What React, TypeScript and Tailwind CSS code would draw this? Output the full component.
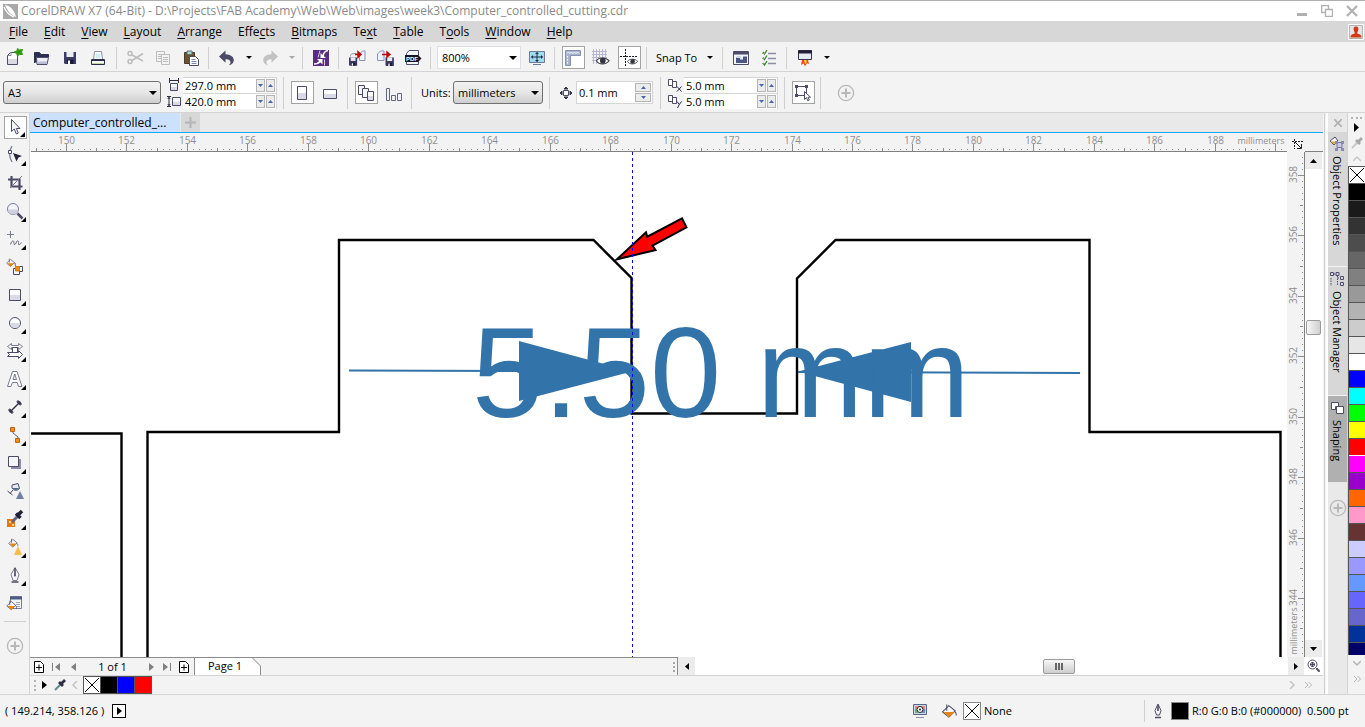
import React from "react";

const DARK = "#4c4c68";
const MID = "#8c8ca6";
const PALE = "#dadae4";
const GHOST = "#bdbdbd";

function Ico({ children, className = "" }: { children: React.ReactNode; className?: string }) {
  return (
    <svg viewBox="0 0 20 20" fill="none" stroke={DARK} className={`h-5 w-5 shrink-0 ${className}`} aria-hidden="true">
      {children}
    </svg>
  );
}

/* ---------- standard toolbar icons ---------- */

const NewIcon = () => (
  <Ico>
    <path d="M3.500 16.500v-9l3-3h7v12z" fill="#fff" />
    <path d="M4 11h9v5H4z" fill={PALE} stroke="none" />
    <path d="M4 7.500h3v-3" stroke={MID} />
    <path d="M10 4l3-1 .5-2.500 2 1.500 3-.5-1 2.500 1 2.500-3-.2-2 1.700-.8-2.500z" fill="#2f9a0c" stroke="#2f9a0c" />
  </Ico>
);
const OpenIcon = () => (
  <Ico>
    <path d="M2.500 15V4.500h5l1.500 2h7.500V9" fill="#2b2f50" stroke="#2b2f50" />
    <path d="M4.500 9.500h12l-1.500 7H5z" fill="#eef0f8" stroke={DARK} />
    <path d="M5.500 13.500h9.500l-.5 2.500h-8.500z" fill="#b9bcd4" stroke="none" />
  </Ico>
);
const DiskShape = ({ x, y, s }: { x: number; y: number; s: number }) => (
  <g transform={`translate(${x} ${y}) scale(${s})`} stroke="none">
    <path d="M0 0h12v12H1l-1-1z" fill="#3c3c64" />
    <path d="M2.500 0h7v5h-7z" fill="#eceef6" />
    <path d="M3 7.500h6.500V12H3z" fill="#1b1b38" />
    <path d="M4 8.500h2V12H4z" fill="#fff" />
  </g>
);
const SaveIcon = () => (
  <Ico>
    <DiskShape x={4} y={4} s={1} />
  </Ico>
);
const PrintIcon = () => (
  <Ico>
    <path d="M6.500 3.500h7l1 8h-9z" fill="#fff" stroke={MID} />
    <path d="M7.500 5.500h5v5h-5z" fill="#d5ecee" stroke="none" />
    <path d="M3.500 11.500h13v5h-13z" fill="#f6f6fa" stroke="#2c2c4c" />
    <path d="M4 12h12" stroke="#2c2c4c" strokeWidth="2" />
    <path d="M4 15.500h12" stroke="#c6d6a8" />
  </Ico>
);
const CutIcon = () => (
  <Ico>
    <g stroke={GHOST} strokeWidth="1.500">
      <circle cx="5" cy="5.500" r="2" />
      <circle cx="5" cy="13.500" r="2" />
      <path d="M7 7l11 6M7 12.500l11-7" />
    </g>
  </Ico>
);
const CopyIcon = () => (
  <Ico>
    <g stroke={GHOST}>
      <path d="M3.500 3.500h8v10h-8z" fill="#f3f3f3" />
      <path d="M5 6.500h4M5 8.500h3M5 10.500h3" />
      <path d="M8.500 6.500h8v10h-8z" fill="#f3f3f3" />
      <path d="M10 9.500h5M10 11.500h5M10 13.500h5" />
    </g>
  </Ico>
);
const PasteIcon = () => (
  <Ico>
    <path d="M3.500 4.500h10v11h-10z" fill="#6b5136" stroke="#4b3a2a" />
    <path d="M6 3h5v3.500H6z" fill="#a9d4d2" stroke="#57706f" />
    <path d="M8.500 8.500h6l3 3v6h-9z" fill="#fff" stroke={DARK} />
    <path d="M10.500 11.500h4M10.500 13.500h5M10.500 15.500h5" stroke="#7d88a8" />
  </Ico>
);
const UndoShape = ({ c }: { c: string }) => (
  <path d="M2 8.500l6.500-6v3.700c5.500.3 8.500 2.800 8.300 6.300-.2 2.700-2.300 4.300-5 4.800 1.600-1.200 2.100-2.500 1.400-4-.7-1.500-2.200-2-4.700-2v3.500z" fill={c} stroke="none" />
);
const UndoIcon = () => (
  <Ico>
    <UndoShape c={DARK} />
  </Ico>
);
const RedoIcon = () => (
  <Ico className="-scale-x-100">
    <UndoShape c="#c2c2c2" />
  </Ico>
);
const LaunchIcon = () => (
  <Ico>
    <path d="M2 2h16v16H2z" fill="#582c83" stroke="none" />
    <path d="M9 2.500l-2 7" stroke="#d9c8ea" />
    <path d="M17 2.500c-2.500.5-4.500 2.500-5 5.500" stroke="#fff" strokeWidth="1.600" />
    <path d="M9.500 5v5h5.500z" fill="#fff" stroke="none" />
    <path d="M3 16c3 0 5-1 6.500-3" stroke="#fff" strokeWidth="1.600" />
    <path d="M6 11h5.500v5.500z" fill="#fff" stroke="none" />
    <path d="M13.500 11.500v6" stroke="#d9c8ea" />
  </Ico>
);
const ImportIcon = () => (
  <Ico>
    <path d="M12.500 12.500V6l3-3h2.500v9.500z" fill="#eef2fa" stroke="#8a93b0" />
    <DiskShape x={2} y={9.500} s={0.68} />
    <path d="M3.500 8.500c0-3 2-3 6-3" stroke="#8a93b0" />
    <path d="M8 6.500h5M11 3.800l3 2.700-3 2.700z" stroke="#c00b0b" fill="#c00b0b" strokeWidth="1.500" />
  </Ico>
);
const ExportIcon = () => (
  <Ico>
    <path d="M2.500 12.500V6l3-3h3.500v9.500z" fill="#eef2fa" stroke="#8a93b0" />
    <DiskShape x={10.500} y={9.500} s={0.7} />
    <path d="M7 6.500h6M12 4l3 2.500L12 9z" stroke="#c00b0b" fill="#c00b0b" strokeWidth="1.500" />
  </Ico>
);
const PdfIcon = () => (
  <Ico>
    <path d="M3.500 16.500v-11l2.500-3h9.500v14z" fill="#f4f4fa" stroke={DARK} />
    <path d="M2 7h13l3.500 3.500-3.500 3.500H2z" fill="#151525" stroke="none" />
    <text x="3" y="12.700" fontSize="6" fontWeight="700" fill="#fff" stroke="none" fontFamily="Liberation Sans, sans-serif">PDF</text>
  </Ico>
);
const ScreenIcon = () => (
  <Ico>
    <path d="M2.500 3.500h15v11h-15z" fill="#9fdcec" stroke="#6a7a98" />
    <path d="M6 16.500h8" stroke="#6a7a98" />
    <path d="M10 4.500v9M4.500 9h11" stroke="#20304a" />
    <path d="M8 6l2-2 2 2zM8 12l2 2 2-2zM6 7L4 9l2 2zM14 7l2 2-2 2z" fill="#20304a" stroke="none" />
  </Ico>
);
const RulersIcon = () => (
  <Ico>
    <path d="M2.500 2.500h15v5h-10v10h-5z" fill="#a9b6d0" stroke="#8490ac" />
    <path d="M4 5.500l1.500-1.500L7 5.500 8.500 4 10 5.500 11.500 4 13 5.500 14.500 4 16 5.500M4.500 8v1.500M4.500 11v1.500M4.500 14v1.500" stroke="#fff" />
  </Ico>
);
const Eye = ({ x, y, s = 1 }: { x: number; y: number; s?: number }) => (
  <g transform={`translate(${x} ${y}) scale(${s})`}>
    <path d="M0 4C2 .5 9 .5 12 4 9 8 2 8 0 4z" fill="#fff" stroke="#3a3a46" />
    <circle cx="6" cy="4" r="2.700" fill="#34343e" stroke="none" />
  </g>
);
const GridIcon = () => (
  <Ico>
    <path d="M2.500 1v15M5.500 1v15M8.500 1v13M11.500 1v13M14.500 1v13M1 3.500h15M1 6.500h15M1 9.500h15M1 12.500h15" stroke="#b4b6cc" />
    <Eye x={5.500} y={8.500} s={1.050} />
  </Ico>
);
const GuidesIcon = () => (
  <Ico>
    <path d="M6.500 1v18M1 8.500h17" stroke="#1c1c2c" strokeDasharray="2 1" />
    <Eye x={8.500} y={10} s={0.85} />
  </Ico>
);
const WelcomeIcon = () => (
  <Ico>
    <path d="M2.500 3.500h15v13h-15z" fill="#f2f4fa" stroke={DARK} />
    <path d="M3 5h14" stroke={DARK} strokeWidth="3" />
    <path d="M5 9.500h4v2h3v-3h4v6.500H5z" fill="#4b5687" stroke="none" />
    <path d="M6 8h4v2H6z" fill="#cfd6ee" stroke="none" />
  </Ico>
);
const OptionsIcon = () => (
  <Ico>
    <path d="M9 5.500h8M9 10.500h8M9 15.500h8" stroke={MID} strokeWidth="1.500" />
    <path d="M4 4l1.500 2L8 2M4 9.500l1.500 2L8 7.500M4 15l1.500 2L8 13" stroke="#3c8a2c" strokeWidth="1.300" />
    <path d="M3 5.500h3M3 10.500h3M3 15.500h3" stroke="#8aa08a" />
  </Ico>
);
const LauncherIcon = () => (
  <Ico>
    <path d="M3.500 2.500h13v9h-13z" fill="#e8eaf2" stroke="#33334c" />
    <path d="M3 4h14" stroke="#20203a" strokeWidth="3" />
    <path d="M7 12h6l1 4-2-.8-2 3-1.500-2.700L6 17z" fill="#f04a16" stroke="none" />
    <path d="M9 12h2.500v3L10 16z" fill="#ffd23e" stroke="none" />
  </Ico>
);

/* ---------- property bar icons ---------- */

const WidthIcon = () => (
  <svg viewBox="0 0 14 14" className="h-[14px] w-[14px] shrink-0" fill="none" stroke={DARK} aria-hidden="true">
    <path d="M3.500 5.500h7v7h-7z" fill="#f4f4fa" />
    <path d="M4 9h6v3H4z" fill={PALE} stroke="none" />
    <path d="M2.500 0v5M11.500 0v5M3 2.500h8" stroke="#2c2c44" />
  </svg>
);
const HeightIcon = () => (
  <svg viewBox="0 0 14 14" className="h-[14px] w-[14px] shrink-0" fill="none" stroke={DARK} aria-hidden="true">
    <path d="M5.500 3.500h8v8h-8z" fill="#f4f4fa" />
    <path d="M6 8h7v3H6z" fill={PALE} stroke="none" />
    <path d="M0 2.500h4M0 12.500h4M2 3v9M.8 5L2 3.500 3.200 5M.8 10L2 11.500 3.200 10" stroke="#2c2c44" />
  </svg>
);
const PortraitIcon = () => (
  <Ico>
    <path d="M5.500 3.500h9v13h-9z" fill="#fff" />
    <path d="M6 10h8v6H6z" fill={PALE} stroke="none" />
  </Ico>
);
const LandscapeIcon = () => (
  <Ico>
    <path d="M3.500 6.500h13v9h-13z" fill="#fff" />
    <path d="M4 11h12v4H4z" fill={PALE} stroke="none" />
  </Ico>
);
const AllPagesIcon = () => (
  <Ico>
    <path d="M2.500 2.500h6v9h-6z" fill="#f4f4fa" />
    <path d="M6.500 5.500h6v9h-6z" fill="#f4f4fa" />
    <path d="M11.500 8.500h6v9h-6z" fill="#fff" />
    <path d="M12 13h5v4h-5z" fill={PALE} stroke="none" />
  </Ico>
);
const CurrentPageIcon = () => (
  <Ico>
    <path d="M2.500 5.500h3v12h-3zM7.500 12.500h4v5h-4zM13.500 10.500h4v7h-4z" fill="#f0f0f6" stroke="#66667e" />
  </Ico>
);
const NudgeIcon = () => (
  <Ico>
    <path d="M7.500 7.500h5v5h-5z" fill="#fff" />
    <path d="M10 4L8 6h4zM10 16l-2-2h4zM4 10l2-2v4zM16 10l-2-2v4z" fill="#33334a" stroke="#33334a" />
  </Ico>
);
const DupIcon = ({ axis }: { axis: "x" | "y" }) => (
  <svg viewBox="0 0 14 14" className="h-[14px] w-[14px] shrink-0" fill="none" stroke={DARK} aria-hidden="true">
    <path d="M.5 1.500h4v6h-4zM4.500 3.500h4v6h-4z" fill="#fff" />
    {axis === "x" ? <path d="M9 8.500l4.500 5M13.500 8.500l-4.500 5" stroke="#2c2c44" /> : <path d="M9 7.500l2.300 3 2.200-3M11.300 10.500L9.500 14" stroke="#2c2c44" />}
  </svg>
);
const TreatIcon = () => (
  <Ico>
    <path d="M3.500 3.500h10v9h-10z" />
    <path d="M2 2h3v3H2zM12 2h3v3h-3zM2 11h3v3H2z" fill={DARK} stroke="none" />
    <path d="M11.500 8.500v8l2-1.800 1.200 3 1.600-.7-1.300-2.800h2.500z" fill="#fff" />
  </Ico>
);
const PlusCircle = ({ label }: { label: string }) => (
  <button aria-label={label} className="shrink-0">
    <svg viewBox="0 0 18 18" className="h-[18px] w-[18px]" fill="none" stroke="#b8b8b8" aria-hidden="true">
      <circle cx="9" cy="9" r="7.600" strokeWidth="1.300" />
      <path d="M9 4.500v9M4.500 9h9" strokeWidth="2" />
    </svg>
  </button>
);

/* ---------- toolbox icons ---------- */

const bucket = (x: number, y: number, s: number) => (
  <g transform={`translate(${x} ${y}) scale(${s})`}>
    <path d="M1 8l6-6 6 5-6 6z" fill="#f6f6fa" stroke={DARK} />
    <path d="M2 8h10.500l-5.500 5z" fill="#e88410" stroke="none" />
    <path d="M5 1v6M12.500 7.500c2 1 1.500 3 1.500 4" stroke={DARK} />
  </g>
);

const tools: { name: string; flyout?: boolean; active?: boolean; art: React.ReactNode }[] = [
  { name: "Pick", flyout: true, active: true, art: <path d="M6.500 2.500v12l2.800-2.500 2 5 2-.9-2-4.600h3.700z" fill="#f6f6fa" /> },
  {
    name: "Shape", flyout: true,
    art: (<>
      <path d="M7 1c-3 5-3 11 0 16" stroke="#7a7a98" strokeWidth="1.300" />
      <path d="M3.500 5.500h3v3h-3z" fill="#fff" />
      <path d="M8 8l9 3-3.500 1.500-2 4z" fill="#22223a" stroke="none" />
    </>),
  },
  {
    name: "Crop", flyout: true,
    art: (<>
      <path d="M6.500 3v10.500h11M3 6.500h11.500V17" strokeWidth="2.200" />
      <path d="M5 15L17 3" stroke="#7a7a98" />
    </>),
  },
  {
    name: "Zoom", flyout: true,
    art: (<>
      <circle cx="8" cy="8" r="5.500" fill="#f4f4fa" stroke="#7a7a98" />
      <path d="M3 8.500h10a5 5 0 01-10 0z" fill="#cfcfe0" stroke="none" />
      <path d="M12.500 12.500l5 5" strokeWidth="2.500" />
    </>),
  },
  {
    name: "Freehand", flyout: true,
    art: (<>
      <path d="M5.500 2v7M2 5.500h7" stroke="#7a7a98" />
      <path d="M5.500 15.500c1.500-4.500 3.500-4.500 3.500-1.500s1.500 1.500 2.500-1 2.500-.5 2 1.500 1.500 1.500 3-1" stroke="#66667e" />
    </>),
  },
  {
    name: "Smart fill",
    art: (<>
      {bucket(1, 1, 0.65)}
      <path d="M11.500 9.500h6v5h-6z" fill="#fff" stroke={DARK} />
      <path d="M8.500 11.500h6v6h-6z" fill="#fff" stroke={DARK} />
      <path d="M10.500 6v8h4V9.500h-4z" fill="#f08a10" stroke="#e07808" />
    </>),
  },
  {
    name: "Rectangle", flyout: true,
    art: (<>
      <path d="M4.500 4.500h11v11h-11z" fill="#fff" />
      <path d="M5 10h10v5H5z" fill={PALE} stroke="none" />
    </>),
  },
  {
    name: "Ellipse", flyout: true,
    art: (<>
      <circle cx="10" cy="10" r="5.500" fill="#fff" />
      <path d="M5 10h10a5 5 0 01-10 0z" fill={PALE} stroke="none" />
    </>),
  },
  {
    name: "Basic shapes", flyout: true,
    art: (<>
      <path d="M2.500 5.500l4-3v2h7v-2l4 3-4 3v-2h-7v2z" fill="#fff" stroke="#7a7a98" />
      <path d="M7.500 6.500h5v5h-5z" fill="#fff" />
      <path d="M2.500 11.500h11V9.500l4 4-4 4v-2h-11l2-2z" fill="#fff" />
    </>),
  },
  {
    name: "Text", flyout: true,
    art: <path d="M2.500 17.500l5-15h4.500l5 15h-3.500l-1.300-4H7.300l-1.300 4zM8 10.500h3.500l-1.700-5.500z" fill="#fff" stroke="#7a7a90" fillRule="evenodd" />,
  },
  {
    name: "Parallel dimension", flyout: true,
    art: (<>
      <path d="M5 15L15 5" strokeWidth="1.500" stroke="#33334a" />
      <path d="M4.500 11l4.500 4.500H4.500zM15.500 9L11 4.500h4.500z" fill="#33334a" stroke="none" />
      <path d="M3.500 12.500l4 4M12.500 3.500l4 4" stroke="#33334a" strokeWidth="1.500" />
    </>),
  },
  {
    name: "Connector", flyout: true,
    art: (<>
      <path d="M8 5v3l5 4v3" stroke="#66667e" />
      <path d="M5.500 2.500h4v4h-4zM10.500 13.500h4v4h-4z" fill="#ff8a10" stroke="#b8641a" />
    </>),
  },
  {
    name: "Drop shadow", flyout: true,
    art: (<>
      <path d="M6 6h10v10H6z" fill="#8c8ca8" stroke="none" />
      <path d="M3.500 3.500h10v10h-10z" fill="#f6f6fa" />
    </>),
  },
  {
    name: "Transparency",
    art: (<>
      <path d="M7 4l6-1.500 1.500 5c-2.500 3-6 2-7.500-.5z" fill="#e8eaf4" />
      <path d="M7.500 7h7c-2.500 3-6 2-7.500 0z" fill="#4a6a86" stroke="none" />
      <path d="M8 9l-3 3.500M2.500 10l5 4" />
      <path d="M15 10l4 8h-8z" fill="#7080a0" stroke="none" />
    </>),
  },
  {
    name: "Color eyedropper", flyout: true,
    art: (<>
      <path d="M2 10h8v8H2z" fill="#e8780c" stroke="none" />
      <path d="M4 12h2v2H4zM7 15h2v2H7z" fill="#ffd79a" stroke="none" />
      <path d="M7 13l6-6" stroke="#66667e" strokeWidth="3" />
      <path d="M11 4.500l4.500 4.500M13 6l4-4" stroke="#22223a" strokeWidth="3.500" />
    </>),
  },
  {
    name: "Interactive fill", flyout: true,
    art: (<>
      {bucket(3, 1, 0.7)}
      <path d="M13 9l4 9H9z" fill="#f6bc50" stroke="none" />
    </>),
  },
  {
    name: "Outline pen", flyout: true,
    art: (<>
      <path d="M10 2.500l-4 7 2 6h4l2-6z" fill="#f4f4fa" stroke="#7a7a90" />
      <path d="M10 3v7M6.500 17h7" strokeWidth="1.600" />
      <circle cx="10" cy="10.500" r="1" fill={DARK} stroke="none" />
    </>),
  },
  {
    name: "Edit fill",
    art: (<>
      <path d="M5.500 3.500h11v12h-11z" fill="#f4f4fa" stroke="#7a7a98" />
      <path d="M5 5h12" stroke="#4c5c86" strokeWidth="3" />
      <path d="M11 9.500h4M11 11.500h4M11 13.500h4" stroke="#a0a0b8" />
      {bucket(1, 7, 0.75)}
    </>),
  },
];

/* ---------- small parts ---------- */

const Sep = ({ tall = false }: { tall?: boolean }) => (
  <span className={`${tall ? "h-8" : "h-[22px]"} mr-[4px] ml-[3px] w-px shrink-0 border-l border-[#cfcfcf]`} />
);

const Caret = ({ muted = false, label }: { muted?: boolean; label: string }) => (
  <button aria-label={label} className="flex h-6 w-[15px] shrink-0 items-center justify-center">
    <svg viewBox="0 0 6 3" className={`h-[3px] w-[6px] ${muted ? "fill-[#a8a8a8]" : "fill-black"}`} aria-hidden="true">
      <path d="M0 0h6L3 3z" />
    </svg>
  </button>
);

function Tool({ label, boxed = false, children }: { label: string; boxed?: boolean; children: React.ReactNode }) {
  return (
    <button aria-label={label} title={label} className="flex h-[23px] w-7 shrink-0 items-center justify-center">
      <span className={`flex h-[23px] w-[23px] items-center justify-center ${boxed ? "border border-[#a3a3a3] bg-white" : ""}`}>
        {children}
      </span>
    </button>
  );
}

function Drop({ label, value, options, className, white = false }: { label: string; value: string; options: string[]; className: string; white?: boolean }) {
  return (
    <span className={`relative flex h-[23px] shrink-0 ${className}`}>
      <select
        aria-label={label}
        defaultValue={value}
        className={`h-full w-full appearance-none pl-[4px] text-[11px] leading-4 text-black outline-none ${
          white ? "border border-[#dcdfe6] bg-white" : "rounded-[3px] border border-[#707070] bg-gradient-to-b from-[#f2f2f2] via-[#e6e6e6] to-[#cfcfcf]"
        }`}
      >
        {options.map((o) => (
          <option key={o}>{o}</option>
        ))}
      </select>
      <svg viewBox="0 0 8 4" className="pointer-events-none absolute top-[10px] right-[4px] h-[4px] w-[8px]" aria-hidden="true">
        <path d="M0 0h8L4 4z" />
      </svg>
    </span>
  );
}

const SpinArrow = ({ up = false }: { up?: boolean }) => (
  <svg viewBox="0 0 5 3" className="h-[3px] w-[5px] fill-[#4a66a8]" aria-hidden="true">
    {up ? <path d="M0 3h5L2.500 0z" /> : <path d="M0 0h5L2.500 3z" />}
  </svg>
);

function SideSpin({ label, value }: { label: string; value: string }) {
  return (
    <span className="flex h-4 w-[94px] items-center gap-px border-t border-r border-[#d5d5d5] bg-white pr-px">
      <input aria-label={label} defaultValue={value} className="h-full w-[72px] min-w-0 flex-1 pl-[2px] text-[11px] leading-4 outline-none" />
      <button aria-label={`${label} down`} className="flex h-[13px] w-[9px] items-center justify-center border border-[#b4b4b4] bg-[#ececec]">
        <SpinArrow />
      </button>
      <button aria-label={`${label} up`} className="flex h-[13px] w-[9px] items-center justify-center border border-[#b4b4b4] bg-[#ececec]">
        <SpinArrow up />
      </button>
    </span>
  );
}

const Cross = () => (
  <svg viewBox="0 0 16 16" className="h-full w-full" stroke="#000" fill="none" aria-hidden="true">
    <path d="M1 1l14 14M15 1L1 15" />
  </svg>
);

const menus: [string, string, string][] = [
  ["", "F", "ile"], ["", "E", "dit"], ["", "V", "iew"], ["", "L", "ayout"], ["", "A", "rrange"], ["Effe", "c", "ts"],
  ["", "B", "itmaps"], ["Te", "x", "t"], ["", "T", "able"], ["T", "o", "ols"], ["", "W", "indow"], ["", "H", "elp"],
];

const palette = [
  "#000000", "#1a1a1a", "#333333", "#4d4d4d", "#666666", "#808080", "#999999", "#b3b3b3", "#cccccc", "#e6e6e6", "#ffffff",
  "#0000ff", "#00ffff", "#00ff00", "#ffff00", "#ff0000", "#ff00ff", "#9900cc", "#ff6600", "#ff99cc", "#663333",
  "#ccccff", "#9999ff", "#6699ff", "#6666ff", "#6666cc", "#003399", "#000066",
];

/* ---------- rulers ---------- */

const MM = 30.23;

function HorizontalRuler() {
  const ticks: string[] = [];
  const labels: { x: number; t: number }[] = [];
  for (let i = -5; i < 205; i++) {
    const x = Math.round(36 + (i * MM) / 5) + 0.5;
    if (i % 10 === 0) {
      ticks.push(`M${x} 11V18`);
      labels.push({ x, t: 150 + i / 5 });
    } else ticks.push(i % 5 === 0 ? `M${x} 15V18` : `M${x} 16V17`);
  }
  return (
    <svg className="h-[19px] min-w-0 flex-1 bg-[#f3f3f3]" role="img" aria-label="Horizontal ruler">
      <path d={ticks.join("")} stroke="#8c8c8c" />
      <path d="M1 18.500H1257" stroke="#808080" />
      {labels.filter((l) => l.t < 189).map((l) => (
        <text key={l.t} x={l.x} y="11" textAnchor="middle" className="fill-[#8f8f8f] text-[10px]">{l.t}</text>
      ))}
      <text x="1231" y="11" textAnchor="middle" className="fill-[#8f8f8f] text-[9px]">millimeters</text>
    </svg>
  );
}

function VerticalRuler() {
  const ticks: string[] = [];
  const labels: { y: number; t: number }[] = [];
  for (let i = -3; i < 80; i++) {
    const y = Math.round(23 + (i * MM) / 5) + 0.5;
    if (i % 10 === 0) {
      ticks.push(`M11 ${y}H17`);
      labels.push({ y, t: 358 - i / 5 });
    } else ticks.push(i % 5 === 0 ? `M13 ${y}H16` : `M15 ${y}H16`);
  }
  return (
    <svg className="h-full w-[18px] shrink-0 bg-[#f3f3f3]" role="img" aria-label="Vertical ruler">
      <path d={ticks.join("")} stroke="#8c8c8c" />
      <path d="M17.500 0V505" stroke="#808080" />
      {labels.filter((l) => l.t > 342).map((l) => (
        <text key={l.t} transform={`translate(10 ${l.y - 1}) rotate(-90)`} textAnchor="middle" className="fill-[#8f8f8f] text-[10px]">{l.t}</text>
      ))}
      <text transform="translate(10 479) rotate(-90)" textAnchor="middle" className="fill-[#8f8f8f] text-[9px]">millimeters</text>
    </svg>
  );
}

function Drawing() {
  return (
    <svg className="h-full min-w-0 flex-1 bg-white" role="img" aria-label="Cutting profile with a 5.50 mm slot">
      <g transform="translate(-30 -152)" fill="none">
        <g stroke="#000" strokeWidth="2.400">
          <path d="M31 433.500H121.500V680" />
          <path d="M147.500 680V432H339V240H593.500L631.500 278V413.500H797V278.500L835.500 240H1089.500V432H1280.500V680" />
        </g>
        <path d="M617 259.300L646 232.300L647.300 236.700L682 218.300L686.500 227.300L652.500 245.500L655.500 250Z" fill="#f00" stroke="#000" strokeWidth="2" />
        <g fill="#3274a9">
          <path d="M349 370.500L632 371.500M798 372L1080 373" stroke="#3274a9" strokeWidth="2" />
          <path d="M519 341L632 371.500L519 401ZM911 342L798 371.500L911 402Z" />
          <text x="472" y="417" className="font-['Liberation_Sans',Arial,sans-serif] text-[128px]">5.50 mm</text>
        </g>
        <path d="M632.500 152V680" stroke="#00f" strokeDasharray="3 3" />
      </g>
    </svg>
  );
}

/* ---------- sections ---------- */

function TitleBar() {
  return (
    <header className="flex h-[21px] shrink-0 items-center border-t border-[#b0b0b0] bg-white pr-[7px] pl-[3px] text-[#8a8a8a]">
      <svg viewBox="0 0 15 15" className="mr-[3px] h-[15px] w-[15px] shrink-0" aria-hidden="true">
        <path d="M0 0h15v15H0z" fill="#a8a8a8" />
        <path d="M2 1c6 1 9 5 11 12C8 11 5 8 2 1z" fill="#fff" />
        <path d="M1 3c2 5 5 8 10 10" stroke="#fff" strokeWidth="1.200" fill="none" />
      </svg>
      <h1 className="truncate text-[12px] leading-4">CorelDRAW X7 (64-Bit) - D:\Projects\FAB Academy\Web\Web\images\week3\Computer_controlled_cutting.cdr</h1>
      <div className="ml-auto flex items-center gap-[13px]">
        <button aria-label="Minimize">
          <svg viewBox="0 0 12 12" className="h-3 w-3" aria-hidden="true"><path d="M1 8h10v3H1z" fill="#b0b0b0" /></svg>
        </button>
        <button aria-label="Restore">
          <svg viewBox="0 0 12 12" className="h-3 w-3" fill="none" stroke="#b0b0b0" strokeWidth="1.300" aria-hidden="true">
            <path d="M4 7.500H.7V.7h6.800v3M4.500 4.500h7v7h-7z" />
          </svg>
        </button>
        <button aria-label="Close">
          <svg viewBox="0 0 12 12" className="h-3 w-3" stroke="#b0b0b0" strokeWidth="2.200" aria-hidden="true"><path d="M1 1l10 10M11 1L1 11" /></svg>
        </button>
      </div>
    </header>
  );
}

function MenuBar() {
  return (
    <nav className="flex h-[21px] shrink-0 items-center gap-4 bg-[#d7d7d7] pr-px pl-[9px]">
      {menus.map(([a, u, b]) => (
        <button key={a + u + b} className="pt-px text-[12px] leading-4">
          {a}
          <span className="underline underline-offset-2">{u}</span>
          {b}
        </button>
      ))}
      <button aria-label="Account" className="ml-auto h-4 w-4 border border-white bg-[#e4e4ea]">
        <svg viewBox="0 0 14 14" className="h-[14px] w-[14px]" aria-hidden="true">
          <path d="M.5.5h13v13H.5z" fill="none" stroke="#b4b4b4" />
          <path d="M7 1.500c2.300 0 2.700 2 2.200 3.700C9 6.500 8.200 7 8.200 8.500c2 .6 4.300 1 4.300 4h-11c0-3 2.300-3.400 4.300-4 0-1.500-.8-2-1-3.300C4.300 3.500 4.700 1.500 7 1.500z" fill="#cf3a14" />
        </svg>
      </button>
    </nav>
  );
}

function StandardBar() {
  return (
    <div className="flex h-[30px] shrink-0 items-center overflow-hidden border-b border-[#d4d4d4] bg-[#f3f3f3] pt-[2px]">
      <Tool label="New"><NewIcon /></Tool>
      <Tool label="Open"><OpenIcon /></Tool>
      <Tool label="Save"><SaveIcon /></Tool>
      <Tool label="Print"><PrintIcon /></Tool>
      <span className="w-px" />
      <Sep />
      <Tool label="Cut"><CutIcon /></Tool>
      <Tool label="Copy"><CopyIcon /></Tool>
      <Tool label="Paste"><PasteIcon /></Tool>
      <Sep />
      <Tool label="Undo"><UndoIcon /></Tool>
      <Caret label="Undo list" />
      <Tool label="Redo"><RedoIcon /></Tool>
      <Caret label="Redo list" muted />
      <Sep />
      <Tool label="Search content"><LaunchIcon /></Tool>
      <Sep />
      <Tool label="Import"><ImportIcon /></Tool>
      <Tool label="Export"><ExportIcon /></Tool>
      <Tool label="Publish to PDF"><PdfIcon /></Tool>
      <Sep />
      <Drop label="Zoom levels" value="800%" options={["800%", "400%", "100%"]} className="ml-[2px] w-[84px]" white />
      <span className="w-[2px]" />
      <Tool label="Full-screen preview"><ScreenIcon /></Tool>
      <Sep />
      <Tool label="Show rulers" boxed><RulersIcon /></Tool>
      <Tool label="Show grid"><GridIcon /></Tool>
      <Tool label="Show guidelines" boxed><GuidesIcon /></Tool>
      <Sep />
      <button className="px-[5px] text-[11px] leading-4 whitespace-nowrap">Snap To</button>
      <Caret label="Snap options" />
      <span className="w-[2px]" />
      <Sep />
      <Tool label="Welcome screen"><WelcomeIcon /></Tool>
      <Tool label="Options"><OptionsIcon /></Tool>
      <Sep />
      <Tool label="Application launcher"><LauncherIcon /></Tool>
      <Caret label="Launcher list" />
    </div>
  );
}

function PropertyBar() {
  return (
    <div className="flex h-[41px] shrink-0 items-center overflow-hidden border-b border-[#d4d4d4] bg-[#f3f3f3] pt-px pl-[3px]">
      <Drop label="Page size" value="A3" options={["A3", "A4", "Letter"]} className="w-[158px]" />
      <div className="ml-[6px] flex flex-col">
        <div className="flex items-center gap-[2px]"><WidthIcon /><SideSpin label="Page width" value="297.0 mm" /></div>
        <div className="flex items-center gap-[2px]"><HeightIcon /><SideSpin label="Page height" value="420.0 mm" /></div>
      </div>
      <span className="w-[3px]" />
      <Sep tall />
      <Tool label="Portrait" boxed><PortraitIcon /></Tool>
      <Tool label="Landscape"><LandscapeIcon /></Tool>
      <Sep tall />
      <Tool label="All pages" boxed><AllPagesIcon /></Tool>
      <Tool label="Current page"><CurrentPageIcon /></Tool>
      <Sep tall />
      <span className="w-[37px] shrink-0 pl-[5px] text-[11px] leading-4">Units:</span>
      <Drop label="Units" value="millimeters" options={["millimeters", "inches"]} className="w-[90px]" />
      <span className="w-[3px]" />
      <Sep tall />
      <span className="ml-[2px] flex h-5 w-5 items-center"><NudgeIcon /></span>
      <span className="flex h-[23px] w-[77px] items-center border border-[#d5d5d5] bg-white pr-px">
        <input aria-label="Nudge distance" defaultValue="0.1 mm" className="h-full w-0 flex-1 pl-[2px] text-[11px] leading-4 outline-none" />
        <span className="flex flex-col gap-px">
          <button aria-label="Nudge up" className="flex h-[9px] w-[16px] items-center justify-center border border-[#b4b4b4] bg-[#ececec]"><SpinArrow up /></button>
          <button aria-label="Nudge down" className="flex h-[9px] w-[16px] items-center justify-center border border-[#b4b4b4] bg-[#ececec]"><SpinArrow /></button>
        </span>
      </span>
      <span className="w-1" />
      <Sep tall />
      <div className="ml-[3px] flex flex-col">
        <div className="flex items-center gap-[2px]"><DupIcon axis="x" /><SideSpin label="Duplicate X" value="5.0 mm" /></div>
        <div className="flex items-center gap-[2px]"><DupIcon axis="y" /><SideSpin label="Duplicate Y" value="5.0 mm" /></div>
      </div>
      <span className="w-[3px]" />
      <Sep tall />
      <Tool label="Treat as filled" boxed><TreatIcon /></Tool>
      <Sep tall />
      <span className="ml-[12px] flex"><PlusCircle label="Customize property bar" /></span>
    </div>
  );
}

function Toolbox() {
  return (
    <aside className="flex w-[30px] shrink-0 flex-col items-center overflow-hidden border-r border-[#d4d4d4] bg-[#f3f3f3]">
      {tools.map((t) => (
        <button key={t.name} aria-label={t.name} title={t.name} className="flex h-7 w-full shrink-0 items-center justify-center pl-px">
          <span className={`relative flex h-[23px] w-[23px] items-center justify-center ${t.active ? "border border-[#a3a3a3] bg-white" : ""}`}>
            <Ico>{t.art}</Ico>
            {t.flyout && (
              <svg viewBox="0 0 5 5" className="absolute right-px bottom-px h-[5px] w-[5px]" aria-hidden="true"><path d="M5 0v5H0z" /></svg>
            )}
          </span>
        </button>
      ))}
      <span className="my-[4px] h-px w-[22px] shrink-0 bg-[#cfcfcf]" />
      <span className="mt-[11px] flex"><PlusCircle label="Customize toolbox" /></span>
    </aside>
  );
}

const AddPage = () => (
  <svg viewBox="0 0 10 12" className="h-3 w-[10px]" fill="#fff" stroke="#000" aria-hidden="true">
    <path d="M.5.500h6l3 3v8h-9zM5 3.500v6M2 6.500h6" />
  </svg>
);

function PageBar() {
  return (
    <div className="flex h-[19px] shrink-0 items-stretch border-b border-[#d4d4d4] bg-[#f3f3f3]">
      <div className="flex w-[164px] shrink-0 items-center border-t border-[#8c8c8c]">
        <button aria-label="Add page before" className="ml-[4px]"><AddPage /></button>
        <button aria-label="First page" className="ml-[8px]">
          <svg viewBox="0 0 8 8" className="h-2 w-2 fill-[#808080]" aria-hidden="true"><path d="M0 0h1v8H0zM8 0v8L3 4z" /></svg>
        </button>
        <button aria-label="Previous page" className="ml-[11px]">
          <svg viewBox="0 0 5 8" className="h-2 w-[5px] fill-[#808080]" aria-hidden="true"><path d="M5 0v8L0 4z" /></svg>
        </button>
        <span className="w-[73px] text-center text-[11px] leading-4">1 of 1</span>
        <button aria-label="Next page">
          <svg viewBox="0 0 5 8" className="h-2 w-[5px] fill-[#808080]" aria-hidden="true"><path d="M0 0v8l5-4z" /></svg>
        </button>
        <button aria-label="Last page" className="ml-[9px]">
          <svg viewBox="0 0 8 8" className="h-2 w-2 fill-[#808080]" aria-hidden="true"><path d="M7 0h1v8H7zM0 0v8l5-4z" /></svg>
        </button>
        <button aria-label="Add page after" className="ml-[8px]"><AddPage /></button>
      </div>
      <button className="relative flex w-[67px] shrink-0 items-center pl-[14px] text-[11px] leading-4">
        <svg viewBox="0 0 67 18" className="absolute inset-0 h-[18px] w-[67px]" fill="#fff" stroke="#8c8c8c" aria-hidden="true">
          <path d="M1 1h57l8 8v9H1z" stroke="none" />
          <path d="M.5 18V.500H67M58.500 1l8 8v9" fill="none" />
        </svg>
        <span className="relative">Page 1</span>
      </button>
      <div className="w-[409px] shrink border-t border-[#8c8c8c]" />
      <div className="flex w-[8px] shrink-0 flex-col items-center justify-center border-t border-r border-[#8c8c8c]">
        <span className="h-[10px] border-l-2 border-dotted border-[#a8a8a8]" />
      </div>
      <div className="flex min-w-0 flex-1 items-center bg-white">
        <button aria-label="Scroll left" className="flex h-full w-[17px] items-center justify-center bg-[#ececec]">
          <svg viewBox="0 0 4 7" className="h-[7px] w-1" aria-hidden="true"><path d="M4 0v7L0 3.500z" /></svg>
        </button>
        <div className="flex flex-1 justify-end pr-[213px]">
          <span className="flex h-[15px] w-8 items-center justify-center gap-px rounded-[2px] border border-[#9a9a9a] bg-gradient-to-b from-[#f6f6f6] to-[#cecece]">
            <i className="h-[7px] w-[2px] bg-[#666]" /><i className="h-[7px] w-[2px] bg-[#666]" /><i className="h-[7px] w-[2px] bg-[#666]" />
          </span>
        </div>
        <button aria-label="Scroll right" className="flex h-full w-4 items-center justify-center bg-[#ececec]">
          <svg viewBox="0 0 4 7" className="h-[7px] w-1" aria-hidden="true"><path d="M0 0v7l4-3.500z" /></svg>
        </button>
        <button aria-label="Navigator" className="flex h-full w-[19px] items-center justify-center">
          <svg viewBox="0 0 14 14" className="h-[14px] w-[14px]" fill="none" stroke={DARK} aria-hidden="true">
            <circle cx="5.500" cy="5.500" r="4.500" /><circle cx="5.500" cy="5.500" r="2" /><path d="M5.500 3v5M3 5.500h5M9 9l3.500 3.500" /><path d="M9.500 9.500l3 3" strokeWidth="2" />
          </svg>
        </button>
      </div>
    </div>
  );
}

const Dropper = ({ c, d }: { c: string; d: string }) => (
  <svg viewBox="0 0 12 12" className="h-3 w-3" fill="none" aria-hidden="true">
    <path d="M1 11l6-6" stroke={c} strokeWidth="2.200" /><path d="M5 3l4 4M7 5l4-4" stroke={d} strokeWidth="2.800" />
  </svg>
);

function DocPalette() {
  return (
    <div className="flex h-[18px] shrink-0 items-center bg-[#f3f3f3] pr-[11px] pl-[4px]">
      <span className="h-[11px] border-l-2 border-dotted border-[#b4b4b4]" />
      <button aria-label="Palette menu" className="ml-[6px]">
        <svg viewBox="0 0 5 8" className="h-2 w-[5px]" aria-hidden="true"><path d="M0 0v8l5-4z" /></svg>
      </button>
      <button aria-label="Sample color" className="ml-[7px]"><Dropper c="#6a8a8a" d="#2c2c44" /></button>
      <button aria-label="Scroll palette left" className="ml-[6px]">
        <svg viewBox="0 0 6 8" className="h-2 w-[6px]" fill="none" stroke="#c4c4c4" strokeWidth="1.500" aria-hidden="true"><path d="M5 0L1 4l4 4" /></svg>
      </button>
      <div className="ml-[5px] flex h-[18px] border border-[#555]">
        <button aria-label="No color" className="h-4 w-4 bg-white"><Cross /></button>
        <button aria-label="Black" className="h-4 w-[17px] border-l border-[#555] bg-black" />
        <button aria-label="Blue" className="h-4 w-[17px] border-l border-[#555] bg-[#0000ff]" />
        <button aria-label="Red" className="h-4 w-[17px] border-l border-[#555] bg-[#ff0000]" />
      </div>
      <div className="ml-auto flex items-center gap-[9px]">
        <svg viewBox="0 0 6 8" className="h-2 w-[6px]" fill="none" stroke="#c4c4c4" strokeWidth="1.500" aria-hidden="true"><path d="M1 0l4 4-4 4" /></svg>
        <svg viewBox="0 0 8 6" className="h-[6px] w-2" fill="none" stroke="#b4b4b4" aria-hidden="true"><path d="M1 0l3 3-3 3M4.500 0l3 3-3 3" /></svg>
      </div>
    </div>
  );
}

function Dockers() {
  const tab = "flex w-full shrink-0 flex-col items-center pt-[4px] pr-px text-[11px] leading-4";
  return (
    <aside className="flex w-[19px] shrink-0 flex-col items-center overflow-hidden bg-[#e9e9e9]">
      <button aria-label="Close docker" className="flex h-[19px] shrink-0 items-center">
        <svg viewBox="0 0 8 8" className="h-2 w-2" stroke="#b0b0b0" strokeWidth="1.600" aria-hidden="true"><path d="M0 0l8 8M8 0L0 8" /></svg>
      </button>
      <button className={`${tab} h-[134px] bg-[#d7d7d7]`}>
        <svg viewBox="0 0 16 16" className="mb-[4px] h-4 w-4" fill="none" stroke={DARK} aria-hidden="true">
          <path d="M1 5l5-4 3 4-4 4z" fill="#fff" /><path d="M1.500 5.500h6L5 8.500z" fill="#e0a040" stroke="none" />
          <path d="M8 6.500h5v5H8z" fill="#c8c8e4" stroke="#7a7aa0" /><path d="M6 5h3v3H6zM12 5h3v3h-3zM6 12h3v3H6zM12 12h3v3h-3z" fill="#8a8ab0" stroke="none" />
        </svg>
        <span className="[writing-mode:vertical-rl]">Object Properties</span>
      </button>
      <button className={`${tab} h-[129px] border-t border-[#f3f3f3] bg-[#d7d7d7]`}>
        <svg viewBox="0 0 16 16" className="mb-[4px] h-4 w-4" fill="none" stroke={DARK} aria-hidden="true">
          <path d="M1.500 1.500h3v3h-3zM7 1.500h3v3H7zM11.500 5.500h3v3h-3zM11.500 11.500h3v3h-3z" fill="#d8d8ea" />
          <path d="M2 7v8M5 3h3M8.500 5v9M8.500 7h3" strokeDasharray="1.500 1" />
        </svg>
        <span className="[writing-mode:vertical-rl]">Object Manager</span>
      </button>
      <button className={`${tab} h-[87px] border-t border-[#f3f3f3] bg-[#b0b0b0]`}>
        <svg viewBox="0 0 16 16" className="mb-[4px] h-4 w-4" fill="#fff" stroke={DARK} aria-hidden="true">
          <path d="M2.500 2.500h7v7h-7zM7.500 6.500h7v7h-7z" /><path d="M8 7h2v3H8z" stroke="none" /><path d="M6.500 9.500v-3h3" fill="none" />
        </svg>
        <span className="[writing-mode:vertical-rl]">Shaping</span>
      </button>
      <span className="mt-[17px] flex"><PlusCircle label="Customize dockers" /></span>
    </aside>
  );
}

function ColorPalette() {
  return (
    <aside className="flex w-[18px] shrink-0 flex-col items-center overflow-hidden border-l border-[#d4d4d4] bg-[#f3f3f3]">
      <span className="mt-[4px] w-[11px] shrink-0 border-t-2 border-dotted border-[#b4b4b4]" />
      <button aria-label="Palette options" className="mt-[4px]">
        <svg viewBox="0 0 5 9" className="h-[9px] w-[5px]" aria-hidden="true"><path d="M0 0v9l5-4.500z" /></svg>
      </button>
      <button aria-label="Eyedropper" className="mt-[5px]"><Dropper c="#cacaca" d="#a8a8a8" /></button>
      <button aria-label="Scroll palette up" className="mt-[7px] mb-[4px]">
        <svg viewBox="0 0 8 6" className="h-[6px] w-2" fill="none" stroke="#c8c8c8" strokeWidth="1.500" aria-hidden="true"><path d="M0 5l4-4 4 4" /></svg>
      </button>
      <div className="flex min-h-0 w-full flex-1 flex-col overflow-hidden border-t border-l border-[#555]">
        <button aria-label="No fill" className="h-[17px] w-full shrink-0 border-b border-[#555] bg-white"><Cross /></button>
        {palette.map((c) => (
          <button
            key={c}
            aria-label={c}
            style={{ backgroundColor: c }}
            className={`h-[17px] w-full shrink-0 border-b ${c === "#ff0000" ? "border-white" : "border-[#555]"}`}
          />
        ))}
      </div>
      <div className="flex h-[39px] shrink-0 flex-col items-center gap-[9px] pt-[6px]">
        <svg viewBox="0 0 8 6" className="h-[6px] w-2" fill="none" stroke="#b4b4b4" strokeWidth="1.500" aria-hidden="true"><path d="M0 0l4 4 4-4" /></svg>
        <svg viewBox="0 0 8 6" className="h-[6px] w-2" fill="none" stroke="#b4b4b4" aria-hidden="true"><path d="M1 0l3 3-3 3M4.500 0l3 3-3 3" /></svg>
      </div>
    </aside>
  );
}

function Workspace() {
  return (
    <main className="flex min-w-0 flex-1 flex-col">
      <div className="flex h-[19px] shrink-0 bg-[#e9e9e9]">
        <button className="w-[150px] bg-[#cce1ff] pt-px pl-[3px] text-left text-[12px] leading-4">Computer_controlled_...</button>
        <button aria-label="New document" className="ml-px flex w-[19px] items-center justify-center bg-[#d7d7d7]">
          <svg viewBox="0 0 11 11" className="h-[11px] w-[11px]" aria-hidden="true"><path d="M4.500 0h2v4.500H11v2H6.500V11h-2V6.500H0v-2h4.500z" fill="#b4b4b4" /></svg>
        </button>
      </div>
      <div className="h-px shrink-0 bg-[#12aaf4]" />
      <div className="flex h-[19px] shrink-0 items-end bg-[#f3f3f3]">
        <HorizontalRuler />
        <svg viewBox="0 0 36 19" className="h-[19px] w-9 shrink-0" fill="none" stroke="#222" aria-hidden="true">
          <path d="M7.500 6v10M5 8.500h11" strokeDasharray="2 1" /><path d="M8 9l6 6M14.500 11v4.500H10" />
          <path d="M18 18.500h18" stroke="#808080" />
        </svg>
      </div>
      <div className="flex min-h-0 flex-1">
        <Drawing />
        <VerticalRuler />
        <div className="flex w-[18px] shrink-0 flex-col items-center bg-white pr-px">
          <button aria-label="Scroll up" className="flex h-[17px] w-full items-center justify-center bg-[#ececec]">
            <svg viewBox="0 0 7 4" className="h-1 w-[7px]" aria-hidden="true"><path d="M0 4h7L3.500 0z" /></svg>
          </button>
          <div className="flex w-full flex-1 flex-col items-center pt-[151px]">
            <span className="h-[15px] w-[15px] rounded-[2px] border border-[#9a9a9a] bg-gradient-to-r from-[#f6f6f6] to-[#d0d0d0]" />
          </div>
          <button aria-label="Scroll down" className="flex h-[17px] w-full items-center justify-center bg-[#ececec]">
            <svg viewBox="0 0 7 4" className="h-1 w-[7px]" aria-hidden="true"><path d="M0 0h7L3.500 4z" /></svg>
          </button>
        </div>
      </div>
      <PageBar />
      <DocPalette />
    </main>
  );
}

function StatusBar() {
  return (
    <footer className="flex h-[33px] shrink-0 items-center overflow-hidden border-t border-[#d4d4d4] bg-[#f3f3f3] pl-[5px] text-[11px] leading-4 whitespace-nowrap">
      <span>( 149.214, 358.126 )</span>
      <button aria-label="Status options" className="ml-[8px] flex h-[14px] w-[14px] items-center justify-center border border-black bg-white">
        <svg viewBox="0 0 5 8" className="h-2 w-[5px]" aria-hidden="true"><path d="M0 0v8l5-4z" /></svg>
      </button>
      <div className="ml-auto flex w-[234px] shrink-0 items-center">
        <Ico>
          <path d="M3.500 3.500h13v10h-13z" fill="#c8d8ec" stroke="#5c6488" />
          <path d="M5 5h10v3H5z" fill="#e08a80" stroke="none" /><path d="M5 8h3v4H5z" fill="#70b080" stroke="none" /><path d="M12 8h3v4h-3z" fill="#7090d0" stroke="none" />
          <circle cx="10" cy="8.500" r="3" fill="#fff" stroke="#222" /><circle cx="10" cy="8.500" r="1" fill="#222" stroke="none" /><path d="M6 16.500h8" stroke="#8a90ac" />
        </Ico>
        <Ico className="ml-[9px]">{bucket(2.500, 2.500, 1.05)}</Ico>
        <span className="ml-[4px] h-[18px] w-[18px] border border-[#888] bg-white"><Cross /></span>
        <span className="ml-[3px]">None</span>
      </div>
      <div className="flex h-[22px] w-[221px] shrink-0 items-center border-l border-[#cfcfcf] pl-[3px]">
        <Ico>
          <path d="M10 3l-3 6.500 1.500 4.500h3l1.500-4.500z" fill="#f4f4fa" /><path d="M10 4v6M7 16.500h6" strokeWidth="1.600" />
        </Ico>
        <span className="ml-[3px] h-[18px] w-[18px] shrink-0 border border-[#888] bg-black" />
        <span className="ml-[3px]">R:0 G:0 B:0 (#000000)&nbsp; 0.500 pt</span>
      </div>
    </footer>
  );
}

export default function App() {
  return (
    <div className="flex h-screen flex-col overflow-hidden bg-[#f3f3f3] font-['Open_Sans','Noto_Sans',sans-serif] text-black">
      <TitleBar />
      <MenuBar />
      <StandardBar />
      <PropertyBar />
      <div className="flex min-h-0 flex-1">
        <Toolbox />
        <Workspace />
        <div className="w-[5px] shrink-0 border-r-2 border-white bg-[#f3f3f3]">
          <div className="ml-[1px] h-full w-px bg-[#cfcfcf]" />
        </div>
        <Dockers />
        <ColorPalette />
      </div>
      <StatusBar />
    </div>
  );
}
